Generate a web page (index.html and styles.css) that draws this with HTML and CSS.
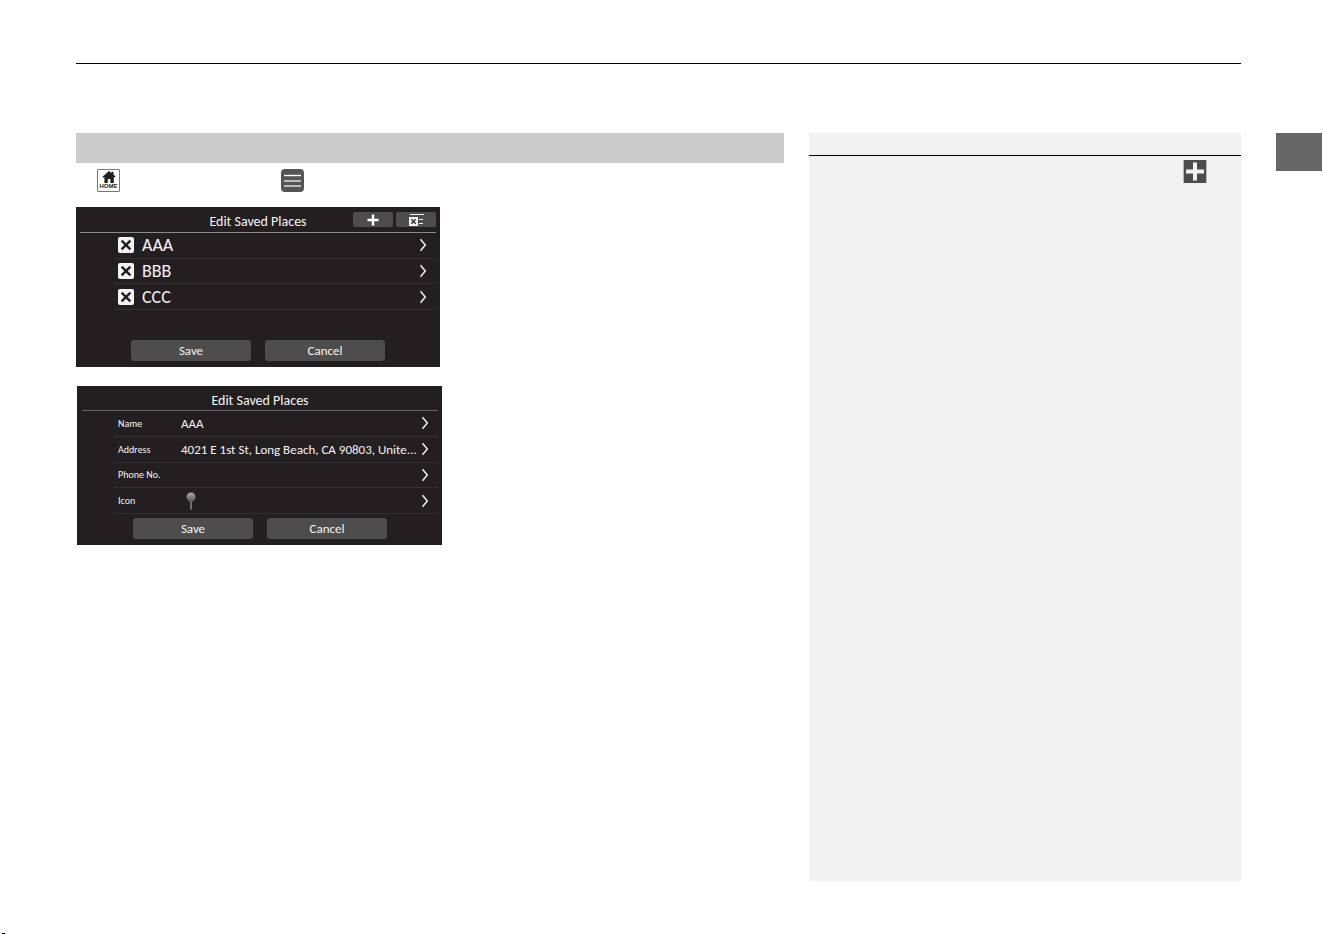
FILE: index.html
```html
<!doctype html>
<html lang="en">
    <head>
        <meta charset="utf-8">
        <title>Edit Saved Places</title>
        <link rel="stylesheet" href="styles.css">
    </head>
    <body>
        <svg class="defs" width="0" height="0" aria-hidden="true">
            <symbol id="chevron" viewBox="0 0 8 14">
                <path d="M1.5 1.2 6.3 7l-4.8 5.8" fill="none" stroke="#eee" stroke-width="1.5"/>
            </symbol>
            <symbol id="cross" viewBox="0 0 16 16">
                <rect width="16" height="16" rx="2" fill="#f4f4f4"/>
                <path d="M3.6 3.6l8.8 8.8M12.4 3.6l-8.8 8.8" stroke="#231f20" stroke-width="2.4"/>
            </symbol>
        </svg>
        <div class="page">
            <div class="spread">
                <header class="rule"></header>
                <div class="columns">
                    <main>
                        <div class="heading"></div>
                        <nav class="path">
                            <button class="home" aria-label="Home">
                                <svg width="14" height="12" viewBox="0 0 14 12">
                                    <path d="M7 0l2.5 2V.8h2V3.600L13.500 5.500l-.8 1-.9-.6V12H8.400V8H5.800v4H2.400V5.900l-1.100.8-.8-1z" fill="#231f20"/>
                                </svg>
                                <span>HOME</span>
                            </button>
                            <button class="menu" aria-label="Menu">
                                <svg width="23" height="23" viewBox="0 0 23 23">
                                    <rect width="23" height="23" rx="4" fill="#555"/>
                                    <path d="M3 6.500h17" stroke="#fff" stroke-width="1.400"/>
                                    <path d="M3 12h17M3 17h17" stroke="#ddd" stroke-width="1.600"/>
                                </svg>
                            </button>
                        </nav>

                        <section class="screen">
                            <div class="bar">
                                <h2>Edit Saved Places</h2>
                                <div class="tools">
                                    <button aria-label="Add">
                                        <svg width="12" height="12" viewBox="0 0 12 12"><path d="M6 .5v11M.5 6h11" stroke="#fff" stroke-width="2.400"/></svg>
                                    </button>
                                    <button aria-label="Delete all">
                                        <svg width="15" height="12" viewBox="0 0 15 12">
                                            <path d="M1 .5h14M10 5.500h4M10 9.500h4" stroke="#eee"/>
                                            <rect y="3" width="9" height="9" fill="#f4f4f4"/>
                                            <path d="M2.300 5.300l4.400 4.400M6.700 5.300L2.300 9.700" stroke="#333" stroke-width="1.500"/>
                                        </svg>
                                    </button>
                                </div>
                            </div>
                            <ul class="rows places">
                                <li>
                                    <button class="icon" aria-label="Delete AAA"><svg width="16" height="16"><use href="#cross"/></svg></button>
                                    <button class="go"><span class="value">AAA</span><svg width="8" height="14"><use href="#chevron"/></svg></button>
                                </li>
                                <li>
                                    <button class="icon" aria-label="Delete BBB"><svg width="16" height="16"><use href="#cross"/></svg></button>
                                    <button class="go"><span class="value">BBB</span><svg width="8" height="14"><use href="#chevron"/></svg></button>
                                </li>
                                <li>
                                    <button class="icon" aria-label="Delete CCC"><svg width="16" height="16"><use href="#cross"/></svg></button>
                                    <button class="go"><span class="value">CCC</span><svg width="8" height="14"><use href="#chevron"/></svg></button>
                                </li>
                            </ul>
                            <div class="actions">
                                <button>Save</button>
                                <button>Cancel</button>
                            </div>
                        </section>

                        <section class="screen screen-detail">
                            <div class="bar">
                                <h2>Edit Saved Places</h2>
                            </div>
                            <ul class="rows fields">
                                <li><button class="go"><span class="label">Name</span><span class="value">AAA</span><svg width="8" height="14"><use href="#chevron"/></svg></button></li>
                                <li><button class="go"><span class="label">Address</span><span class="value">4021 E 1st St, Long Beach, CA 90803, Unite...</span><svg width="8" height="14"><use href="#chevron"/></svg></button></li>
                                <li><button class="go"><span class="label">Phone No.</span><span class="value"></span><svg width="8" height="14"><use href="#chevron"/></svg></button></li>
                                <li>
                                    <button class="go">
                                        <span class="label">Icon</span>
                                        <span class="value pin">
                                            <svg width="10" height="18" viewBox="0 0 10 18">
                                                <defs>
                                                    <linearGradient id="ball" x2="0" y2="1">
                                                        <stop offset="0" stop-color="#aaa"/>
                                                        <stop offset="1" stop-color="#555"/>
                                                    </linearGradient>
                                                </defs>
                                                <path d="M5 8v9.500" stroke="#aaa" stroke-width="1.200"/>
                                                <circle cx="5" cy="5" r="4.500" fill="url(#ball)"/>
                                            </svg>
                                        </span>
                                        <svg width="8" height="14"><use href="#chevron"/></svg>
                                    </button>
                                </li>
                            </ul>
                            <div class="actions">
                                <button>Save</button>
                                <button>Cancel</button>
                            </div>
                        </section>
                    </main>
                    <aside>
                        <div class="aside-head"></div>
                        <div class="aside-body">
                            <svg width="24" height="23" viewBox="0 0 24 23" shape-rendering="crispEdges">
                                <rect width="24" height="23" fill="#b5b5b5"/>
                                <rect x="1" width="22" height="23" fill="#4d4c4c"/>
                                <path d="M3 9h18v5H3zM10 2h4v19h-4z" fill="#a5a5a5"/>
                                <path d="M3 10h18v3H3zM10 3h4v17h-4z" fill="#f2f2f2"/>
                            </svg>
                        </div>
                    </aside>
                </div>
            </div>
            <div class="tab"></div>
        </div>
        <footer><span class="mark"></span></footer>
    </body>
</html>
```

FILE: styles.css
```css
* {
    box-sizing: border-box;
}

body {
    display: flex;
    flex-direction: column;
    min-height: 100vh;
    margin: 0;
    background: #fff;
    font-family: Carlito, Lato, sans-serif;
}

button {
    padding: 0;
    border: none;
    background: none;
    color: inherit;
    font: inherit;
    cursor: pointer;
}

svg {
    display: block;
    flex: none;
}

.defs {
    position: absolute;
}

.page {
    display: flex;
    flex: 1;
    padding: 63px 1px 0 76px;
}

.spread {
    display: flex;
    flex: 1;
    flex-direction: column;
}

.rule {
    margin-bottom: 69px;
    border-top: 1px solid #000;
}

.columns {
    display: grid;
    flex: 1;
    grid-template-columns: 18fr 11fr;
    gap: 25px;
}

.heading {
    height: 30px;
    background: #cbcbcb;
}

.path {
    display: flex;
    gap: 161px;
    padding: 6px 21px 15px;
}

.home {
    display: flex;
    flex-direction: column;
    align-items: center;
    justify-content: center;
    width: 23px;
    height: 23px;
    border: 1px solid #777;
    border-radius: 1px;
    color: #231f20;
    font: bold 6px/7px "Liberation Sans", sans-serif;
}

/* head unit screens */
.screen {
    display: flex;
    flex-direction: column;
    width: 364px;
    max-width: 100%;
    height: 160px;
    padding: 0 4px 6px;
    background: #231f20;
    color: #f4f4f4;
}

.screen-detail {
    width: 365px;
    height: 159px;
    margin: 19px 1px 0;
    padding-left: 5px;
}

.bar {
    display: grid;
    grid-template-columns: 1fr auto 1fr;
    align-items: center;
    height: 26px;
    padding-top: 5px;
    border-bottom: 1px solid #8a8a8a;
}

.screen-detail .bar {
    height: 25px;
    border-color: #666;
}

.bar h2 {
    grid-column: 2;
    margin: 0;
    font-size: 14px;
    font-weight: normal;
    line-height: 18px;
}

.tools {
    display: flex;
    align-self: start;
    justify-content: flex-end;
    gap: 3px;
}

.tools button {
    display: flex;
    align-items: center;
    justify-content: center;
    width: 40px;
    height: 15px;
    border-radius: 2px;
    background: #4d4d4d;
}

.rows {
    display: grid;
    grid-auto-rows: 1fr;
    height: 77px;
    margin: 0 0 0 34px;
    padding: 0;
    list-style: none;
}

.rows li {
    display: flex;
    align-items: center;
    min-height: 0;
    padding: 0 9px 0 4px;
    border-bottom: 1px solid #332f30;
}

.go {
    display: flex;
    flex: 1;
    align-items: center;
    min-width: 0;
    text-align: left;
}

.value {
    flex: 1;
    white-space: nowrap;
}

.places .icon {
    margin-right: 8px;
}

.places .value {
    font-size: 18px;
    line-height: 22px;
}

.fields {
    height: 103px;
    margin-left: 32px;
}

.fields .label {
    width: 63px;
    font-size: 10px;
}

.fields .value {
    font-size: 13px;
}

.pin {
    padding-left: 5px;
}

.actions {
    display: flex;
    justify-content: center;
    gap: 14px;
    margin-top: auto;
}

.actions button {
    width: 120px;
    height: 21px;
    border-radius: 3px;
    background: #4d4d4d;
    font-size: 13px;
}

aside {
    background: #f2f2f2;
}

.aside-head {
    height: 23px;
    border-bottom: 1px solid #000;
}

.aside-body {
    display: flex;
    justify-content: flex-end;
    padding: 4px 34px;
}

.tab {
    width: 46px;
    height: 38px;
    margin: 70px 0 0 35px;
    background: #666;
}

footer {
    display: flex;
    align-items: flex-end;
    height: 53px;
    padding-left: 2px;
}

.mark {
    width: 3px;
    height: 1px;
    background: #000;
}
```
